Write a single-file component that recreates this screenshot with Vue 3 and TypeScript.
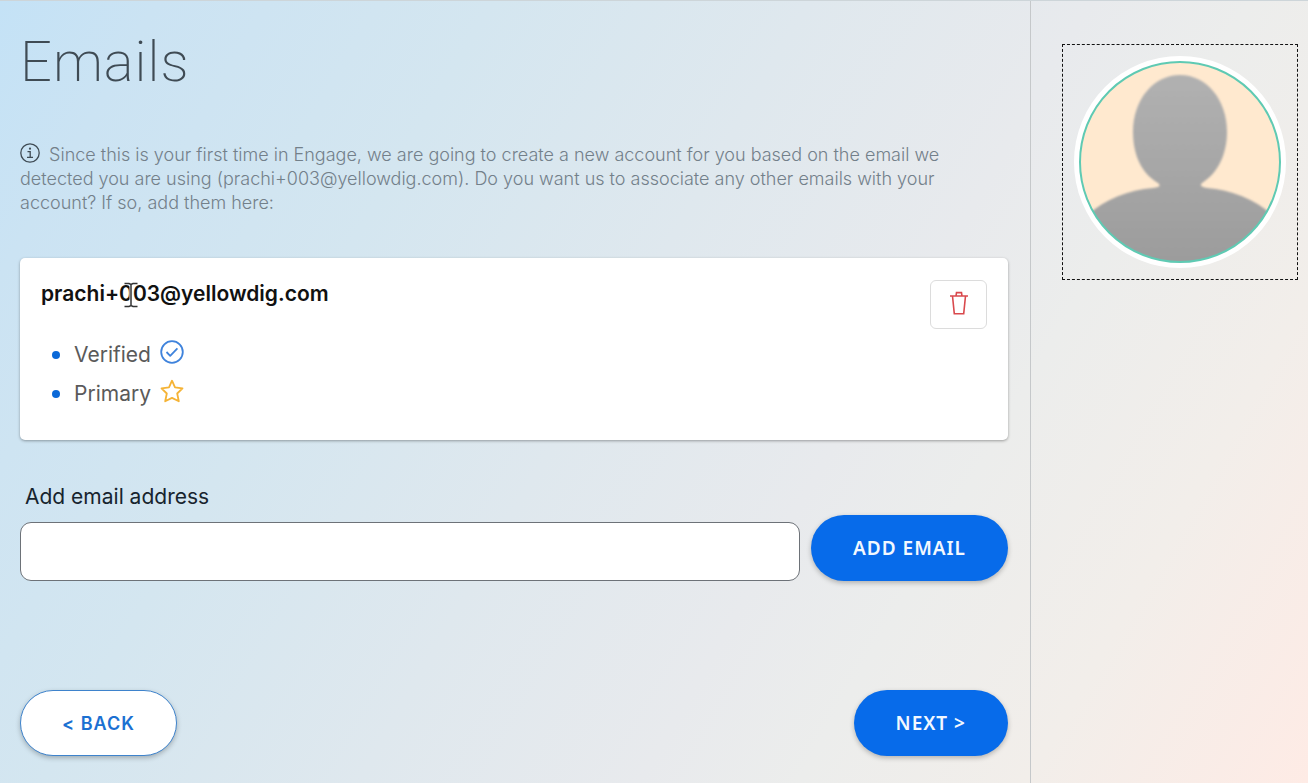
<script setup lang="ts">
import { ref } from 'vue'

interface EmailEntry {
  address: string
  verified: boolean
  primary: boolean
}

const emails = ref<EmailEntry[]>([
  { address: 'prachi+003@yellowdig.com', verified: true, primary: true },
])
const newEmail = ref('')

function addEmail(): void {
  const address = newEmail.value.trim()
  if (!address) return
  emails.value.push({ address, verified: false, primary: false })
  newEmail.value = ''
}

function removeEmail(index: number): void {
  emails.value.splice(index, 1)
}
</script>

<template>
  <div class="page">
    <main class="content">
      <h1 class="title">Emails</h1>

      <p class="intro">
        <svg class="info-icon" viewBox="0 0 20 20" aria-hidden="true">
          <circle cx="10" cy="10" r="9.2" />
          <path d="M7.500 8.600h2.700v5.600M7 14.400h6" />
          <circle class="dot" cx="10" cy="5.7" r="1.1" />
        </svg>
        Since this is your first time in Engage, we are going to create a new account for you based on the email we
        detected you are using (prachi+003@yellowdig.com). Do you want us to associate any other emails with your
        account? If so, add them here:
      </p>

      <section v-for="(email, index) in emails" :key="email.address" class="card">
        <div class="card-body">
          <h2 class="address">
            {{ email.address }}
            <svg v-if="index === 0" class="cursor" viewBox="0 0 14 26" aria-hidden="true">
              <path class="halo" d="M0.500 1.500h4.500L7 2.500l2-1h4.500M7 2.500v21M0.500 24.500h4.500l2-1l2 1h4.500" />
              <path d="M0.500 1.500h4.500L7 2.500l2-1h4.500M7 2.500v21M0.500 24.500h4.500l2-1l2 1h4.500" />
            </svg>
          </h2>
          <ul class="states">
            <li v-if="email.verified">
              <span>Verified</span>
              <svg class="state-icon verified" viewBox="0 0 24 24" aria-hidden="true">
                <circle cx="12" cy="12" r="10.800" />
                <path d="M6.500 12l3.700 3.800L17.400 8.300" />
              </svg>
            </li>
            <li v-if="email.primary">
              <span>Primary</span>
              <svg class="state-icon primary" viewBox="0 0 24 24" aria-hidden="true">
                <path d="M12 1.700l3 6.700 7.500.900-5.300 5.200 1.600 7.800L12 18.900l-6.800 3.400 1.600-7.800L1.500 9.300 9 8.400z" />
              </svg>
            </li>
          </ul>
        </div>
        <button class="delete" type="button" aria-label="Delete email" @click="removeEmail(index)">
          <svg viewBox="0 0 18 24" aria-hidden="true">
            <path d="M0 5h18M2.500 5l1.800 17.800h9.400L15.500 5M6 5l.500-3.400h5L12 5" />
          </svg>
        </button>
      </section>

      <form class="add-form" @submit.prevent="addEmail">
        <div class="field">
          <label for="new-email">Add email address</label>
          <input id="new-email" v-model="newEmail" type="text" />
        </div>
        <button class="pill solid" type="submit">ADD EMAIL</button>
      </form>

      <nav class="steps" aria-label="Steps">
        <button class="pill outline" type="button">&lt; BACK</button>
        <button class="pill solid" type="button">NEXT &gt;</button>
      </nav>
    </main>

    <aside class="side">
      <div class="avatar-frame">
        <svg class="avatar" viewBox="0 0 212 212" role="img" aria-label="Profile picture">
          <defs>
            <linearGradient id="figure" x1="0" y1="20" x2="0" y2="206" gradientUnits="userSpaceOnUse">
              <stop offset="0" stop-color="#b1b1b1" />
              <stop offset="1" stop-color="#9c9c9c" />
            </linearGradient>
            <clipPath id="disc"><circle cx="106" cy="106" r="100" /></clipPath>
            <filter id="soft"><feGaussianBlur stdDeviation="1" /></filter>
          </defs>
          <circle cx="106" cy="106" r="106" fill="#fff" />
          <circle cx="106" cy="106" r="100" fill="#ffe9cf" />
          <g clip-path="url(#disc)">
            <path
              filter="url(#soft)"
              fill="url(#figure)"
              d="M106 19C132 19 153 43 153 76C153 98 144 117 128 127C125 130 128 131 133 132C157 134 181 143 198 159L212 220H0L14 159C31 143 55 134 79 132C86 131 87 130 84 127C67 117 59 98 59 76C59 43 80 19 106 19Z"
            />
          </g>
          <circle cx="106" cy="106" r="100" fill="none" stroke="#5fcab3" stroke-width="2" />
        </svg>
      </div>
    </aside>
  </div>
</template>

<style>
body {
  margin: 0;
}
</style>

<style scoped>
.page {
  box-sizing: border-box;
  display: flex;
  min-height: 100vh;
  border-top: 1px solid #cdd5d9;
  background: linear-gradient(120deg, #c4e2f6 0%, #cbe3f3 9%, #d4e6f0 28%, #dfe8ee 46%, #e8eaed 62%, #ecedec 71%, #f2eeea 84%, #feebe5 100%);
  font-family: Inter, "Liberation Sans", sans-serif;
  color: #3f4b54;
}

.content {
  box-sizing: border-box;
  flex: 1;
  min-width: 0;
  padding: 28px 22px 27px 20px;
  display: flex;
  flex-direction: column;
}

.title {
  margin: 0;
  font-family: Roboto, sans-serif;
  font-size: 56px;
  line-height: 66px;
  font-weight: 200;
  letter-spacing: 1px;
}

.intro {
  margin: 48px 0 0;
  padding-right: 20px;
  font-size: 18px;
  line-height: 24px;
  font-weight: 300;
  color: #73808a;
}

.info-icon {
  width: 20px;
  height: 20px;
  margin-right: 4px;
  vertical-align: -2px;
  fill: none;
  stroke: #3f4b54;
  stroke-width: 1.3;
}

.info-icon .dot {
  fill: #3f4b54;
  stroke: none;
}

.card {
  display: flex;
  justify-content: space-between;
  align-items: flex-start;
  margin-top: 43px;
  padding: 22px 21px;
  min-height: 138px;
  border-radius: 5px;
  background: #fff;
  box-shadow: 0 1px 3px rgba(0, 0, 0, 0.35);
}

.address {
  position: relative;
  margin: 0;
  font-size: 21px;
  line-height: 28px;
  font-weight: 600;
  color: #111;
}

.cursor {
  position: absolute;
  left: 83px;
  top: 2px;
  width: 14px;
  height: 26px;
  fill: none;
  stroke: #333;
  stroke-width: 1.5;
}

.cursor .halo {
  stroke: #fff;
  stroke-width: 3;
}

.states {
  list-style: none;
  margin: 27px 0 0;
  padding: 0 0 0 11px;
  font-size: 21px;
  line-height: 39px;
  color: #5a5a5a;
}

.states li {
  display: flex;
  align-items: center;
}

.states li::before {
  content: "";
  width: 8px;
  height: 8px;
  margin-right: 14px;
  border-radius: 50%;
  background: #0b69d8;
}

.state-icon {
  width: 24px;
  height: 24px;
  margin: 0 0 5px 9px;
  fill: none;
  stroke-width: 1.8;
  stroke-linejoin: round;
}

.verified {
  stroke: #3f83dc;
}

.primary {
  stroke: #f5b335;
}

.delete {
  display: flex;
  justify-content: center;
  width: 57px;
  height: 49px;
  padding: 10px 0 0;
  border: 1px solid #dcdcdc;
  border-radius: 6px;
  background: #fff;
}

.delete svg {
  width: 18px;
  height: 24px;
  fill: none;
  stroke: #d9494d;
  stroke-width: 1.6;
}

.add-form {
  display: flex;
  align-items: flex-end;
  gap: 11px;
  margin-top: 43px;
}

.field {
  flex: 1;
  display: flex;
  flex-direction: column;
}

.field label {
  margin: 0 5px 11px;
  font-size: 21px;
  line-height: 28px;
  color: #17242e;
}

.field input {
  box-sizing: border-box;
  width: 100%;
  height: 59px;
  padding: 0 16px;
  border: 1px solid #6d7278;
  border-radius: 11px;
  background: #fff;
  font: inherit;
  font-size: 21px;
}

.pill {
  height: 66px;
  padding: 0 42px;
  border: 0;
  border-radius: 33px;
  font-family: "Noto Sans", sans-serif;
  font-size: 19px;
  font-weight: 600;
  letter-spacing: 1px;
  white-space: nowrap;
  box-shadow: 0 2px 5px rgba(0, 0, 0, 0.25);
}

.solid {
  background: #076bea;
  color: #f2f8ff;
}

.outline {
  padding: 0 41px;
  border: 1px solid #3e83cc;
  background: #fff;
  color: #1b70d2;
  font-family: Inter, sans-serif;
  font-size: 18px;
}

.steps {
  display: flex;
  justify-content: space-between;
  margin-top: auto;
}

.side {
  box-sizing: border-box;
  flex: none;
  padding: 43px 10px 0 31px;
  border-left: 1px solid #c5c8ca;
}

.avatar-frame {
  display: flex;
  justify-content: center;
  align-items: center;
  width: 234px;
  height: 234px;
  border: 1px dashed #111;
}

.avatar {
  width: 212px;
  height: 212px;
}
</style>
